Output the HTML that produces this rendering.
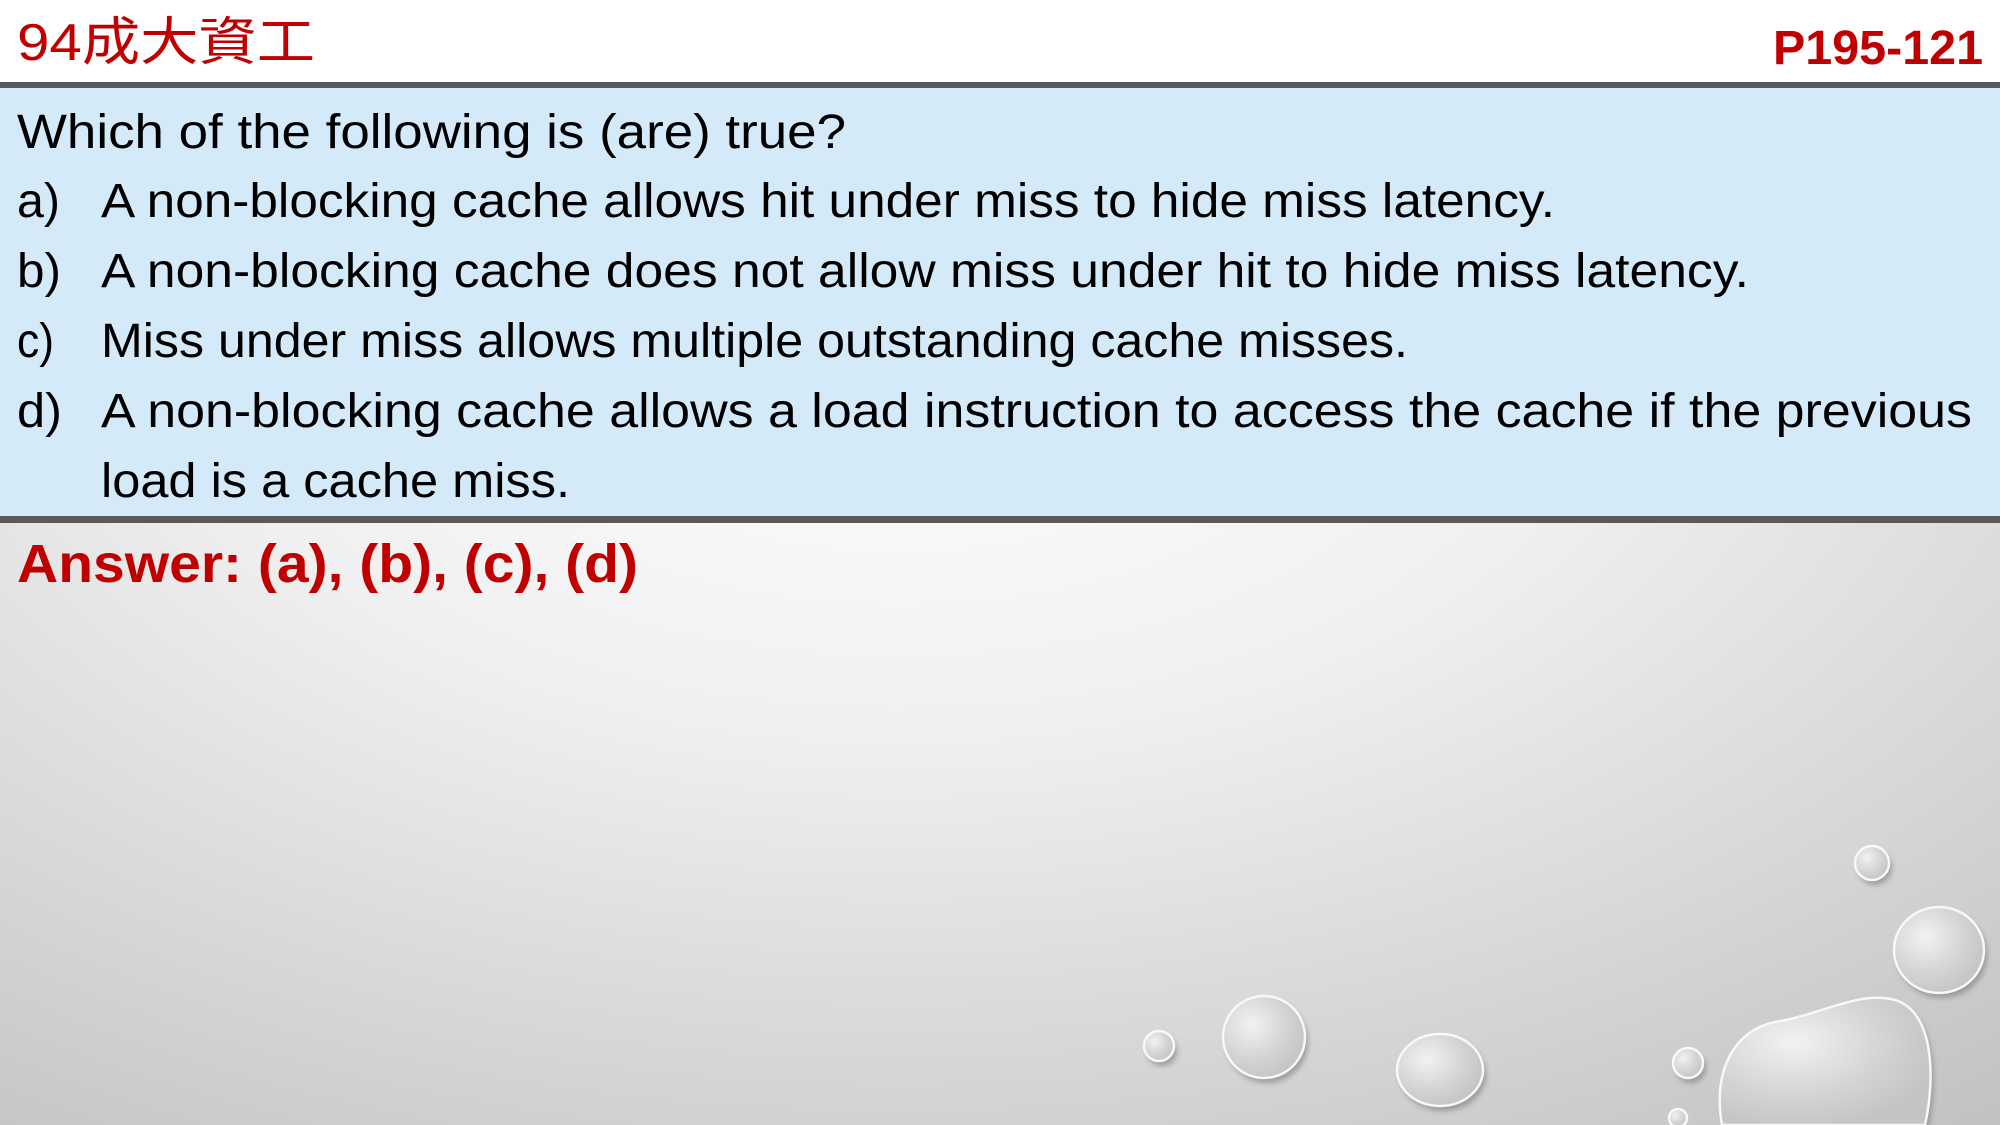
<!DOCTYPE html>
<html><head><meta charset="utf-8"><style>html,body{margin:0;padding:0;width:2000px;height:1125px;overflow:hidden}</style></head>
<body>
<svg width="2000" height="1125" viewBox="0 0 2000 1125" xmlns="http://www.w3.org/2000/svg">
<defs>
<radialGradient id="bg" cx="0.45" cy="0.3" r="1">
<stop offset="0" stop-color="#ffffff"/><stop offset="0.35" stop-color="#f0f0f0"/><stop offset="1" stop-color="#b8b8b8"/>
</radialGradient>
<radialGradient id="drop" cx="0.35" cy="0.35" r="0.7">
<stop offset="0" stop-color="#f2f2f2"/><stop offset="0.6" stop-color="#d4d4d4"/><stop offset="1" stop-color="#c4c4c4"/>
</radialGradient>
<filter id="blur"><feGaussianBlur stdDeviation="3"/></filter>
</defs>
<rect width="2000" height="1125" fill="url(#bg)"/>
<rect width="2000" height="82" fill="#fff"/>
<rect y="82" width="2000" height="6" fill="#595959"/>
<rect y="88" width="2000" height="428" fill="#D5EAF9"/>
<rect y="516" width="2000" height="7" fill="#595959"/>
<g font-family="Liberation Sans, 'Noto Sans CJK TC', sans-serif">
<text x="17" y="60" font-size="52" fill="#C00000" textLength="298" lengthAdjust="spacingAndGlyphs">94成大資工</text>
<text x="1773" y="64" font-size="48" font-weight="bold" fill="#C00000" textLength="210" lengthAdjust="spacingAndGlyphs">P195-121</text>
<g font-size="48" fill="#000">
<text x="17" y="148" textLength="829" lengthAdjust="spacingAndGlyphs">Which of the following is (are) true?</text>
<text x="17" y="217" textLength="43" lengthAdjust="spacingAndGlyphs">a)</text>
<text x="101" y="217" textLength="1454" lengthAdjust="spacingAndGlyphs">A non-blocking cache allows hit under miss to hide miss latency.</text>
<text x="17" y="287" textLength="44" lengthAdjust="spacingAndGlyphs">b)</text>
<text x="101" y="287" textLength="1648" lengthAdjust="spacingAndGlyphs">A non-blocking cache does not allow miss under hit to hide miss latency.</text>
<text x="17" y="357" textLength="37" lengthAdjust="spacingAndGlyphs">c)</text>
<text x="101" y="357" textLength="1307" lengthAdjust="spacingAndGlyphs">Miss under miss allows multiple outstanding cache misses.</text>
<text x="17" y="427" textLength="45" lengthAdjust="spacingAndGlyphs">d)</text>
<text x="101" y="427" textLength="1871" lengthAdjust="spacingAndGlyphs">A non-blocking cache allows a load instruction to access the cache if the previous</text>
<text x="101" y="497" textLength="469" lengthAdjust="spacingAndGlyphs">load is a cache miss.</text>
</g>
<text x="17" y="582" font-size="54" font-weight="bold" fill="#C00000" textLength="621" lengthAdjust="spacingAndGlyphs">Answer: (a), (b), (c), (d)</text>
</g>
<g fill="#777" opacity="0.6" filter="url(#blur)" transform="translate(3,5)">
<ellipse cx="1159" cy="1046" rx="15" ry="15"/>
<ellipse cx="1264" cy="1037" rx="41" ry="41"/>
<ellipse cx="1440" cy="1070" rx="43" ry="36"/>
<ellipse cx="1872" cy="863" rx="17" ry="17"/>
<ellipse cx="1939" cy="950" rx="45" ry="43"/>
<ellipse cx="1688" cy="1063" rx="15" ry="15"/>
<path d="M1722 1125 C1712 1070 1735 1030 1775 1022 C1820 1015 1860 990 1895 1000 C1935 1012 1935 1080 1925 1125 Z"/>
</g>
<g stroke="#f8f8f8" stroke-width="2.5" fill="url(#drop)">
<ellipse cx="1159" cy="1046" rx="15" ry="15"/>
<ellipse cx="1264" cy="1037" rx="41" ry="41"/>
<ellipse cx="1440" cy="1070" rx="43" ry="36"/>
<ellipse cx="1872" cy="863" rx="17" ry="17"/>
<ellipse cx="1939" cy="950" rx="45" ry="43"/>
<ellipse cx="1688" cy="1063" rx="15" ry="15"/>
<ellipse cx="1678" cy="1118" rx="9" ry="9"/>
<path d="M1722 1125 C1712 1070 1735 1030 1775 1022 C1820 1015 1860 990 1895 1000 C1935 1012 1935 1080 1925 1125 Z"/>
</g>
</svg>
</body></html>
